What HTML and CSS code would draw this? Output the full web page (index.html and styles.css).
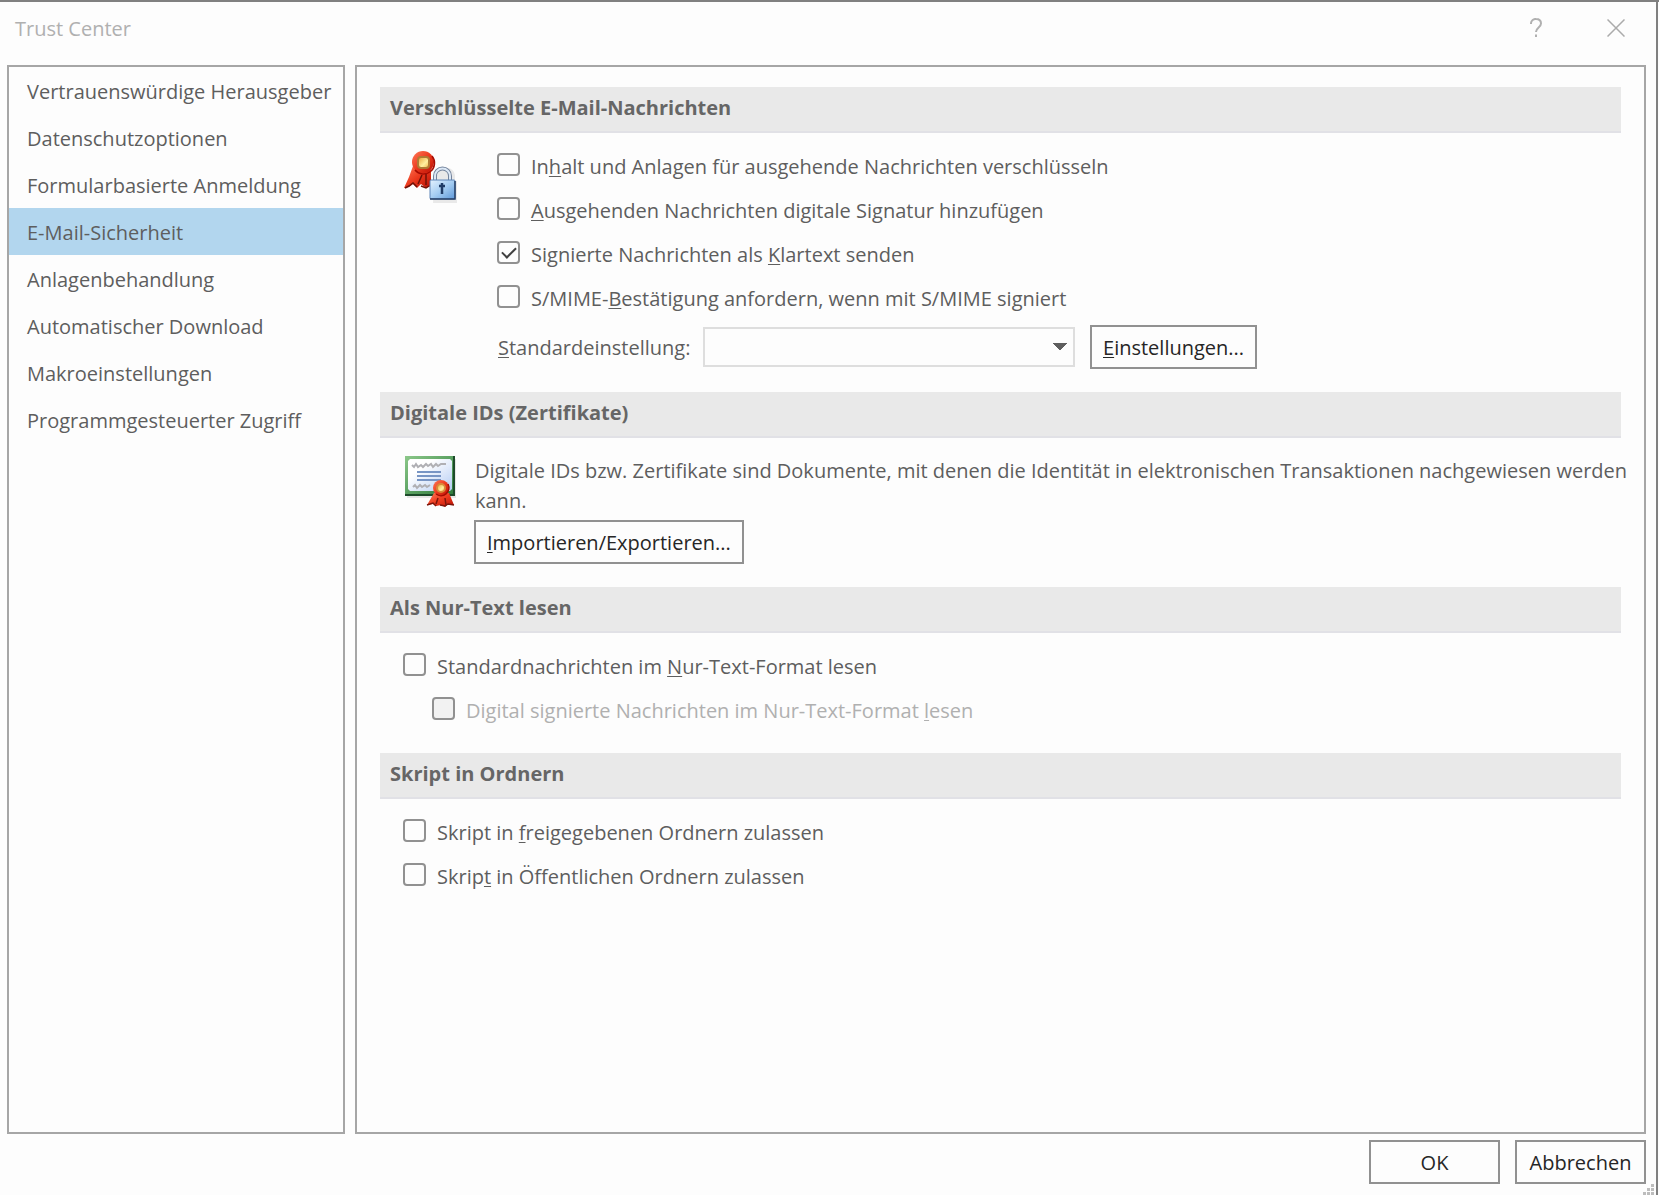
FILE: index.html
```html
<!DOCTYPE html>
<html lang="de">
<head>
<meta charset="utf-8">
<title>Trust Center</title>
<link rel="stylesheet" href="styles.css">
</head>
<body>
<div class="dialog">
  <header class="titlebar">
    <h1 class="title">Trust Center</h1>
    <button class="caption-button" type="button" aria-label="Hilfe">
      <svg width="12" height="20" viewBox="0 0 12 20" fill="none" stroke="#b0b0b0" stroke-width="2"><path d="M1 6V5a4.500 4.500 0 0 1 5-4c3 0 5 1.500 5 4.500 0 4-5 4-5 8.500M6 16.500v2.500"/></svg>
    </button>
    <button class="caption-button" type="button" aria-label="Schließen">
      <svg width="18" height="18" viewBox="0 0 18 18" fill="none" stroke="#ababab" stroke-width="1.500"><path d="M.5.500l17 17M17.500.500l-17 17"/></svg>
    </button>
  </header>

  <div class="body">
    <nav class="nav">
      <a class="nav-item" href="#">Vertrauenswürdige Herausgeber</a>
      <a class="nav-item" href="#">Datenschutzoptionen</a>
      <a class="nav-item" href="#">Formularbasierte Anmeldung</a>
      <a class="nav-item selected" href="#" aria-current="page">E-Mail-Sicherheit</a>
      <a class="nav-item" href="#">Anlagenbehandlung</a>
      <a class="nav-item" href="#">Automatischer Download</a>
      <a class="nav-item" href="#">Makroeinstellungen</a>
      <a class="nav-item" href="#">Programmgesteuerter Zugriff</a>
    </nav>

    <main class="content">
      <section class="section">
        <h2 class="section-title">Verschlüsselte E-Mail-Nachrichten</h2>
        <div class="section-body with-icon">
          <svg class="section-icon" width="54" height="54" viewBox="-1 0 54 54">
            <defs>
              <linearGradient id="red" x1="0" y1="0" x2="1" y2="1"><stop offset="0" stop-color="#ff7a58"/><stop offset=".5" stop-color="#ec3a1e"/><stop offset="1" stop-color="#b80f04"/></linearGradient>
              <linearGradient id="gold" x1="0" y1="0" x2="1" y2="1"><stop offset="0" stop-color="#e8a030"/><stop offset=".6" stop-color="#fff0a0"/><stop offset="1" stop-color="#f0b040"/></linearGradient>
              <linearGradient id="steel" x1="0" y1="0" x2="1" y2="1"><stop offset="0" stop-color="#e4f2ff"/><stop offset=".5" stop-color="#a5cdf2"/><stop offset="1" stop-color="#5d97d8"/></linearGradient>
            </defs>
            <path d="M30 25h4v-2a9 9 0 0 1 17 2v6h2v22H29z" fill="#000" opacity=".08"/>
            <path d="M9 16L5 27 0 38l5-1 4-3 4 4 4-4 5 4 5-2V20z" fill="url(#red)"/>
            <path d="M1 38l4-2 4-3 4 4M17 36l5 2 3-2M18 25l-4 9M22 24v11" fill="none" stroke="#6f1208" stroke-width="1.500"/>
            <circle cx="19" cy="12" r="11" fill="url(#red)"/>
            <path d="M28 6a11 11 0 0 1-17 14" fill="none" stroke="#a60b02" stroke-width="1.500"/>
            <rect x="14" y="7" width="11" height="11" rx="3" fill="url(#gold)" stroke="#b07a34" stroke-width="2"/>
            <path d="M31 30v-4a7 7 0 0 1 15 0v4" fill="none" stroke="#74849c" stroke-width="4"/>
            <path d="M31 30v-4a7 7 0 0 1 15 0v4" fill="none" stroke="#dce8f6" stroke-width="2"/>
            <rect x="26" y="30" width="25" height="19" rx="1" fill="url(#steel)" stroke="#5f86b8" stroke-width="1"/>
            <path d="M26 49h25V31" fill="none" stroke="#263f66" stroke-width="1.500"/>
            <path d="M38 33v11M35 36h6" fill="none" stroke="#203c66" stroke-width="2.500"/>
          </svg>
          <div class="fields">
            <label class="check"><input type="checkbox"><span>In<u>h</u>alt und Anlagen für ausgehende Nachrichten verschlüsseln</span></label>
            <label class="check"><input type="checkbox"><span><u>A</u>usgehenden Nachrichten digitale Signatur hinzufügen</span></label>
            <label class="check"><input type="checkbox" checked><span>Signierte Nachrichten als <u>K</u>lartext senden</span></label>
            <label class="check"><input type="checkbox"><span>S/MIME-<u>B</u>estätigung anfordern, wenn mit S/MIME signiert</span></label>
            <div class="setting">
              <label class="setting-label" for="preset"><u>S</u>tandardeinstellung:</label>
              <select class="select" id="preset"><option></option></select>
              <button class="button" type="button"><u>E</u>instellungen...</button>
            </div>
          </div>
        </div>
      </section>

      <section class="section">
        <h2 class="section-title">Digitale IDs (Zertifikate)</h2>
        <div class="section-body with-icon ids">
          <svg class="section-icon" width="54" height="54" viewBox="-1 0 54 54">
            <defs>
              <linearGradient id="green" x1="0" y1="0" x2="1" y2="1"><stop offset="0" stop-color="#8cc88a"/><stop offset="1" stop-color="#2e7d3c"/></linearGradient>
              <linearGradient id="paper" x1="0" y1="0" x2="1" y2="1"><stop offset=".3" stop-color="#fff"/><stop offset="1" stop-color="#b4ccf4"/></linearGradient>
            </defs>
            <path d="M3 3h49v39H3z" fill="#000" opacity=".09"/>
            <path d="M1 0h50v40H1z" fill="#1d4b2a"/>
            <path d="M1 0h48v38H1z" fill="url(#green)"/>
            <path d="M6 3h40l2 2v28l-2 2H6l-2-2V5z" fill="url(#paper)"/>
            <path d="M8 9l2 2 2-3 2 3 3-2 2 2 3-3 2 2 3-2 2 3 3-3 2 2 3-2h5M9 31l2-2 2 3 3-3 2 2 3-2 2 2 3-2" fill="none" stroke="#b0b0b4" stroke-width="2"/>
            <path d="M13 16h24M13 20h24M13 24h24" stroke="#7895c4" stroke-width="2"/>
            <path d="M30 37l-7 12 6-1 3 2 5-1 4 2 3-3 6 1-5-12z" fill="url(#red)"/>
            <path d="M23 49l6-2 3 3M36 49l5 1 3-2 6 1M34 42l-2 6M41 42l1 7" fill="none" stroke="#7c160c" stroke-width="1.500"/>
            <circle cx="37" cy="32" r="8" fill="url(#red)"/>
            <path d="M44 28a8 8 0 0 1-12 10" fill="none" stroke="#a60b02" stroke-width="1.500"/>
            <circle cx="37" cy="32" r="4" fill="url(#gold)" stroke="#d98a3a" stroke-width="2"/>
          </svg>
          <div class="fields">
            <p class="text">Digitale IDs bzw. Zertifikate sind Dokumente, mit denen die Identität in elektronischen Transaktionen nachgewiesen werden kann.</p>
            <button class="button" type="button"><u>I</u>mportieren/Exportieren...</button>
          </div>
        </div>
      </section>

      <section class="section">
        <h2 class="section-title">Als Nur-Text lesen</h2>
        <div class="section-body">
          <label class="check"><input type="checkbox"><span>Standardnachrichten im <u>N</u>ur-Text-Format lesen</span></label>
          <label class="check nested"><input type="checkbox" disabled><span>Digital signierte Nachrichten im Nur-Text-Format <u>l</u>esen</span></label>
        </div>
      </section>

      <section class="section">
        <h2 class="section-title">Skript in Ordnern</h2>
        <div class="section-body">
          <label class="check"><input type="checkbox"><span>Skript in <u>f</u>reigegebenen Ordnern zulassen</span></label>
          <label class="check"><input type="checkbox"><span>Skrip<u>t</u> in Öffentlichen Ordnern zulassen</span></label>
        </div>
      </section>
    </main>
  </div>

  <footer class="footer">
    <button class="button" type="button">OK</button>
    <button class="button" type="button">Abbrechen</button>
  </footer>
  <svg class="grip" width="11" height="11" viewBox="0 0 11 11" fill="#bdbdbd"><path d="M8 0h3v3H8zM4 4h3v3H4zM8 4h3v3H8zM0 8h3v3H0zM4 8h3v3H4zM8 8h3v3H8z"/></svg>
</div>
</body>
</html>
```
FILE: styles.css
```css
* {
  box-sizing: border-box;
}

body {
  margin: 0;
  border-top: 2px solid #808080;
  padding-right: 1px;
  background: #fdfdfd;
  color: #5e5e5e;
  font-family: "Open Sans", "Noto Sans", sans-serif;
  font-size: 20px;
  line-height: 30px;
}

button,
select,
input {
  margin: 0;
  font: inherit;
}

u {
  text-decoration-thickness: 1px;
  text-underline-offset: 2px;
  text-decoration-skip-ink: none;
}

.dialog {
  position: relative;
  display: flex;
  flex-direction: column;
  min-height: calc(100vh - 2px);
  padding: 0 10px 11px 7px;
  border-right: 2px solid #808080;
}

.titlebar {
  display: flex;
  align-items: center;
  height: 63px;
  padding: 0 0 12px 8px;
}

.title {
  flex: 1;
  margin: 0;
  padding-top: 2px;
  color: #b0b0b0;
  font-size: 20px;
  font-weight: 400;
}

.caption-button {
  display: flex;
  align-items: center;
  justify-content: center;
  width: 60px;
  height: 40px;
  margin-left: 20px;
  padding: 0;
  border: 0;
  background: none;
}

.body {
  flex: 1;
  display: flex;
  gap: 10px;
}

.nav,
.content {
  border: 2px solid #a6a6a6;
}

.nav {
  flex: 0 0 338px;
}

.nav-item {
  display: block;
  padding: 10px 8px 7px 18px;
  color: inherit;
  text-decoration: none;
  white-space: nowrap;
}

.nav-item.selected {
  background: #b2d6ee;
}

.content {
  flex: 1;
  padding: 20px 23px;
}

.section {
  margin-bottom: 23px;
}

.section-title {
  margin: 0;
  padding: 6px 10px 8px;
  border-bottom: 2px solid #e1e1e6;
  background: #e9e9e9;
  color: #666;
  font-size: 20px;
  font-weight: 700;
}

.section-body {
  padding: 9px 0 0 23px;
}

.with-icon {
  display: flex;
  gap: 40px;
}

.ids {
  gap: 17px;
  padding-top: 18px;
}

.section-icon {
  flex: none;
  margin-top: 8px;
}

.ids .section-icon {
  margin-top: 0;
}

.fields {
  flex: 1;
}

.check {
  display: flex;
  align-items: flex-start;
  gap: 11px;
  width: fit-content;
  padding: 10px 0 4px;
}

.check input {
  appearance: none;
  flex: none;
  display: grid;
  place-items: center;
  width: 23px;
  height: 23px;
  margin-top: 1px;
  border: 2px solid #919191;
  border-radius: 4px;
  background: #fdfdfd;
}

.check input:checked::before {
  content: "";
  width: 12px;
  height: 6px;
  margin-bottom: 4px;
  border: solid #404040;
  border-width: 0 0 2px 2px;
  transform: rotate(-45deg);
}

.nested {
  padding-left: 29px;
  color: #b0b0b0;
}

.nested input {
  background: #f2f2f2;
}

.setting {
  display: flex;
  align-items: center;
  margin-top: 7px;
}

.setting-label {
  width: 206px;
  padding: 2px 0 0 1px;
}

.select {
  appearance: none;
  width: 372px;
  height: 40px;
  margin-right: 15px;
  border: 2px solid #dedede;
  border-radius: 0;
  background: conic-gradient(from -45deg at 50% 100%, #5e5e5e 25%, transparent 0) right 6px top 14px / 14px 7px no-repeat;
}

.button {
  height: 44px;
  padding: 2px 11px 0;
  border: 2px solid #919191;
  background: #fdfdfd;
  color: #262626;
}

.text {
  margin: 0 -16px 4px 0;
  padding-left: 1px;
}

.footer {
  display: flex;
  justify-content: flex-end;
  gap: 15px;
  padding-top: 6px;
}

.footer .button {
  width: 131px;
}

.grip {
  position: absolute;
  right: 2px;
  bottom: 0;
}
```
